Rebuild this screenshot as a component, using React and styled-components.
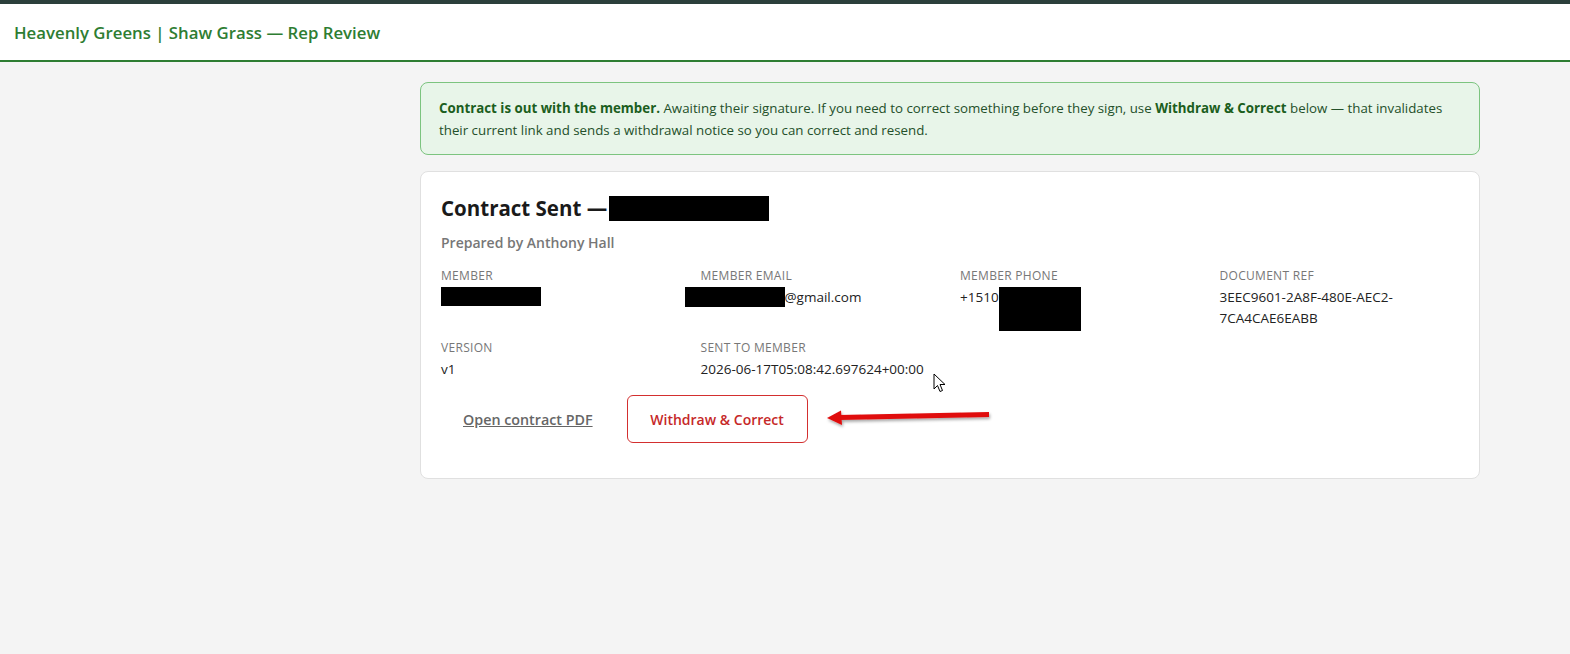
import React from "react";
import styled, { createGlobalStyle } from "styled-components";

const GlobalStyle = createGlobalStyle`
  html, body {
    margin: 0;
    padding: 0;
    background: #f4f4f4;
    font-family: "Open Sans", "Noto Sans", sans-serif;
    color: #222;
  }
`;

const Page = styled.div`
  min-height: 654px;
  border-top: 4px solid #2b3f3b;
  position: relative;
`;

const Header = styled.header`
  background: #fff;
  border-bottom: 2px solid #2e7d32;
  height: 56px;
  display: flex;
  align-items: center;
  padding: 0 14px;
`;

const Brand = styled.h1`
  margin: 0;
  font-size: 16.8px;
  font-weight: 600;
  color: #2e7d32;
`;

const Layout = styled.main`
  display: grid;
  grid-template-columns: 400px 1060px;
  column-gap: 20px;
  padding-top: 20px;
`;

const Column = styled.section`
  grid-column: 2;
  display: flex;
  flex-direction: column;
  gap: 16px;
`;

const Notice = styled.div`
  background: #e8f5e9;
  border: 1px solid #7cc47f;
  border-radius: 8px;
  padding: 14px 18px 13px;
  font-size: 13.3px;
  line-height: 22px;
  color: #24502a;

  strong {
    font-weight: 700;
    color: #1b5e20;
  }
`;

const Card = styled.div`
  background: #fff;
  border: 1px solid #e0e0e0;
  border-radius: 8px;
  padding: 22px 20px 35px;
`;

const Title = styled.h2`
  margin: 0;
  font-size: 20.5px;
  font-weight: 700;
  color: #1a1a1a;
  display: flex;
  align-items: center;
  gap: 2px;
`;

const Redacted = styled.span`
  display: inline-block;
  background: #000;
  width: ${(p) => p.w}px;
  height: ${(p) => p.h}px;
  vertical-align: ${(p) => p.valign || "middle"};
  margin-left: ${(p) => p.ml || 0}px;
`;

const Prepared = styled.div`
  margin-top: 11px;
  font-size: 14px;
  font-weight: 600;
  color: #777;
`;

const Fields = styled.div`
  margin-top: 16px;
  display: grid;
  grid-template-columns: repeat(4, 1fr);
  column-gap: 20px;
  row-gap: 9px;
`;

const Field = styled.div`
  display: flex;
  flex-direction: column;
  gap: 3px;
`;

const Label = styled.div`
  font-size: 12px;
  letter-spacing: 0.3px;
  text-transform: uppercase;
  color: #777;
  line-height: 16px;
`;

const Value = styled.div`
  font-size: 13.5px;
  line-height: 21px;
  color: #222;
  display: flex;
  align-items: flex-start;
  flex-wrap: wrap;
  max-width: ${(p) => (p.wide ? "none" : "200px")};
`;

const Actions = styled.div`
  margin-top: 15px;
  display: flex;
  align-items: center;
  gap: 12px;
  position: relative;
`;

const LinkButton = styled.a`
  padding: 12px 22px;
  font-size: 14.3px;
  font-weight: 600;
  color: #666;
  text-decoration: underline;
  cursor: pointer;
`;

const DangerButton = styled.button`
  height: 48px;
  width: 181px;
  background: #fff;
  border: 1px solid #d32f2f;
  border-radius: 6px;
  color: #c62828;
  font-family: inherit;
  font-size: 14px;
  font-weight: 600;
  cursor: pointer;
`;

const Arrow = styled.svg`
  position: absolute;
  left: 384px;
  top: 12px;
  overflow: visible;
`;

const Cursor = styled.svg`
  position: absolute;
  left: 933px;
  top: 369px;
`;

export default function App() {
  return (
    <Page>
      <GlobalStyle />
      <Header>
        <Brand>Heavenly Greens | Shaw Grass — Rep Review</Brand>
      </Header>
      <Layout>
        <Column>
          <Notice>
            <strong>Contract is out with the member.</strong> Awaiting their
            signature. If you need to correct something before they sign, use{" "}
            <strong>Withdraw &amp; Correct</strong> below — that invalidates
            their current link and sends a withdrawal notice so you can correct
            and resend.
          </Notice>
          <Card>
            <Title>
              Contract Sent —<Redacted w={160} h={25} />
            </Title>
            <Prepared>Prepared by Anthony Hall</Prepared>
            <Fields>
              <Field>
                <Label>Member</Label>
                <Value>
                  <Redacted w={100} h={19} />
                </Value>
              </Field>
              <Field>
                <Label>Member Email</Label>
                <Value>
                  <Redacted w={100} h={20} ml={-16} />
                  @gmail.com
                </Value>
              </Field>
              <Field>
                <Label>Member Phone</Label>
                <Value>
                  +1510
                  <Redacted w={82} h={44} valign="top" />
                </Value>
              </Field>
              <Field>
                <Label>Document Ref</Label>
                <Value>3EEC9601-2A8F-480E-AEC2-7CA4CAE6EABB</Value>
              </Field>
              <Field>
                <Label>Version</Label>
                <Value>v1</Value>
              </Field>
              <Field>
                <Label>Sent to member</Label>
                <Value wide>2026-06-17T05:08:42.697624+00:00</Value>
              </Field>
            </Fields>
            <Actions>
              <LinkButton>Open contract PDF</LinkButton>
              <DangerButton>Withdraw &amp; Correct</DangerButton>
              <Arrow width="170" height="20" viewBox="0 0 170 20">
                <defs>
                  <filter id="sh" x="-10%" y="-50%" width="120%" height="250%">
                    <feDropShadow dx="1" dy="2" stdDeviation="1.5" floodColor="#000" floodOpacity="0.35" />
                  </filter>
                </defs>
                <g filter="url(#sh)">
                  <path d="M14 8 L164 5 L164 10 L14 13 Z" fill="#e01010" />
                  <path d="M2 11 L16 3.5 L17 18 Z" fill="#e01010" />
                </g>
              </Arrow>
            </Actions>
          </Card>
        </Column>
      </Layout>
      <Cursor width="14" height="20" viewBox="0 0 14 20">
        <path d="M1 1 L1 16 L4.5 12.5 L7 18.5 L9.5 17.5 L7 11.5 L12 11.5 Z" fill="#fff" stroke="#000" strokeWidth="1" strokeLinejoin="round" />
      </Cursor>
    </Page>
  );
}
